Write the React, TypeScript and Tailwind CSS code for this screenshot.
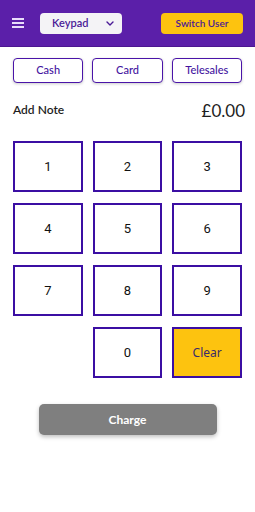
import React from 'react';

const KEYS = ['1', '2', '3', '4', '5', '6', '7', '8', '9'];

export default function App() {
  return (
    <div className="w-[255px] h-[512px] bg-white font-['Lato',sans-serif] text-[#222]">
      {/* top bar */}
      <div className="h-[47px] bg-[#5b1fa9] border-b border-[#4c1790] flex items-center px-3">
        <svg width="12" height="10" viewBox="0 0 12 10" className="mr-4">
          <rect x="0" y="0" width="12" height="2" fill="#e9ddfb" />
          <rect x="0" y="4" width="12" height="2" fill="#e9ddfb" />
          <rect x="0" y="8" width="12" height="2" fill="#e9ddfb" />
        </svg>
        <div className="w-[82px] h-[21px] rounded-[4px] bg-[#f4f3f6] flex items-center justify-between pl-3 pr-2 text-[11px] font-semibold text-[#4a1a96]">
          <span>Keypad</span>
          <svg width="8" height="5" viewBox="0 0 8 5">
            <path d="M1 1l3 3 3-3" fill="none" stroke="#4a1a96" strokeWidth="1.4" strokeLinecap="round" strokeLinejoin="round" />
          </svg>
        </div>
        <button className="ml-auto w-[82px] h-[21px] rounded-[4px] bg-[#fdc30f] text-[10px] font-semibold text-[#4a1a96]">
          Switch User
        </button>
      </div>

      {/* payment types */}
      <div className="flex gap-[9px] px-[13px] mt-[11px]">
        {['Cash', 'Card', 'Telesales'].map((t) => (
          <button
            key={t}
            className="flex-1 h-[25px] rounded-[4px] border-[1.5px] border-[#4a14a8] bg-white shadow-[0_1px_3px_rgba(0,0,0,0.2)] text-[11px] font-medium text-[#4314a0]"
          >
            {t}
          </button>
        ))}
      </div>

      <div className="flex items-end justify-between px-[13px] mt-[18px]">
        <span className="text-[12px] font-semibold text-[#1e1e1e]">Add Note</span>
        <span className="text-[17px] text-[#1e1e1e] leading-none mr-[-3px]">£0.00</span>
      </div>

      {/* keypad */}
      <div className="grid grid-cols-3 gap-x-[10px] gap-y-[11px] px-[13px] mt-[22px] font-['Roboto',sans-serif]">
        {KEYS.map((k) => (
          <button
            key={k}
            className="h-[51px] border-2 border-[#3b0ea3] bg-white text-[13px] text-[#111]"
          >
            {k}
          </button>
        ))}
        <div />
        <button className="h-[51px] border-2 border-[#3b0ea3] bg-white text-[13px] text-[#111]">0</button>
        <button className="h-[51px] border-2 border-[#3b0ea3] bg-[#fdc30f] text-[12px] text-[#3a2a6a] font-['Noto_Sans',sans-serif]">
          Clear
        </button>
      </div>

      <div className="flex justify-center mt-[26px]">
        <button className="w-[178px] h-[31px] rounded-[5px] bg-[#7f7f7f] shadow-[0_2px_4px_rgba(0,0,0,0.25)] text-[12px] font-bold text-white">
          Charge
        </button>
      </div>
    </div>
  );
}
